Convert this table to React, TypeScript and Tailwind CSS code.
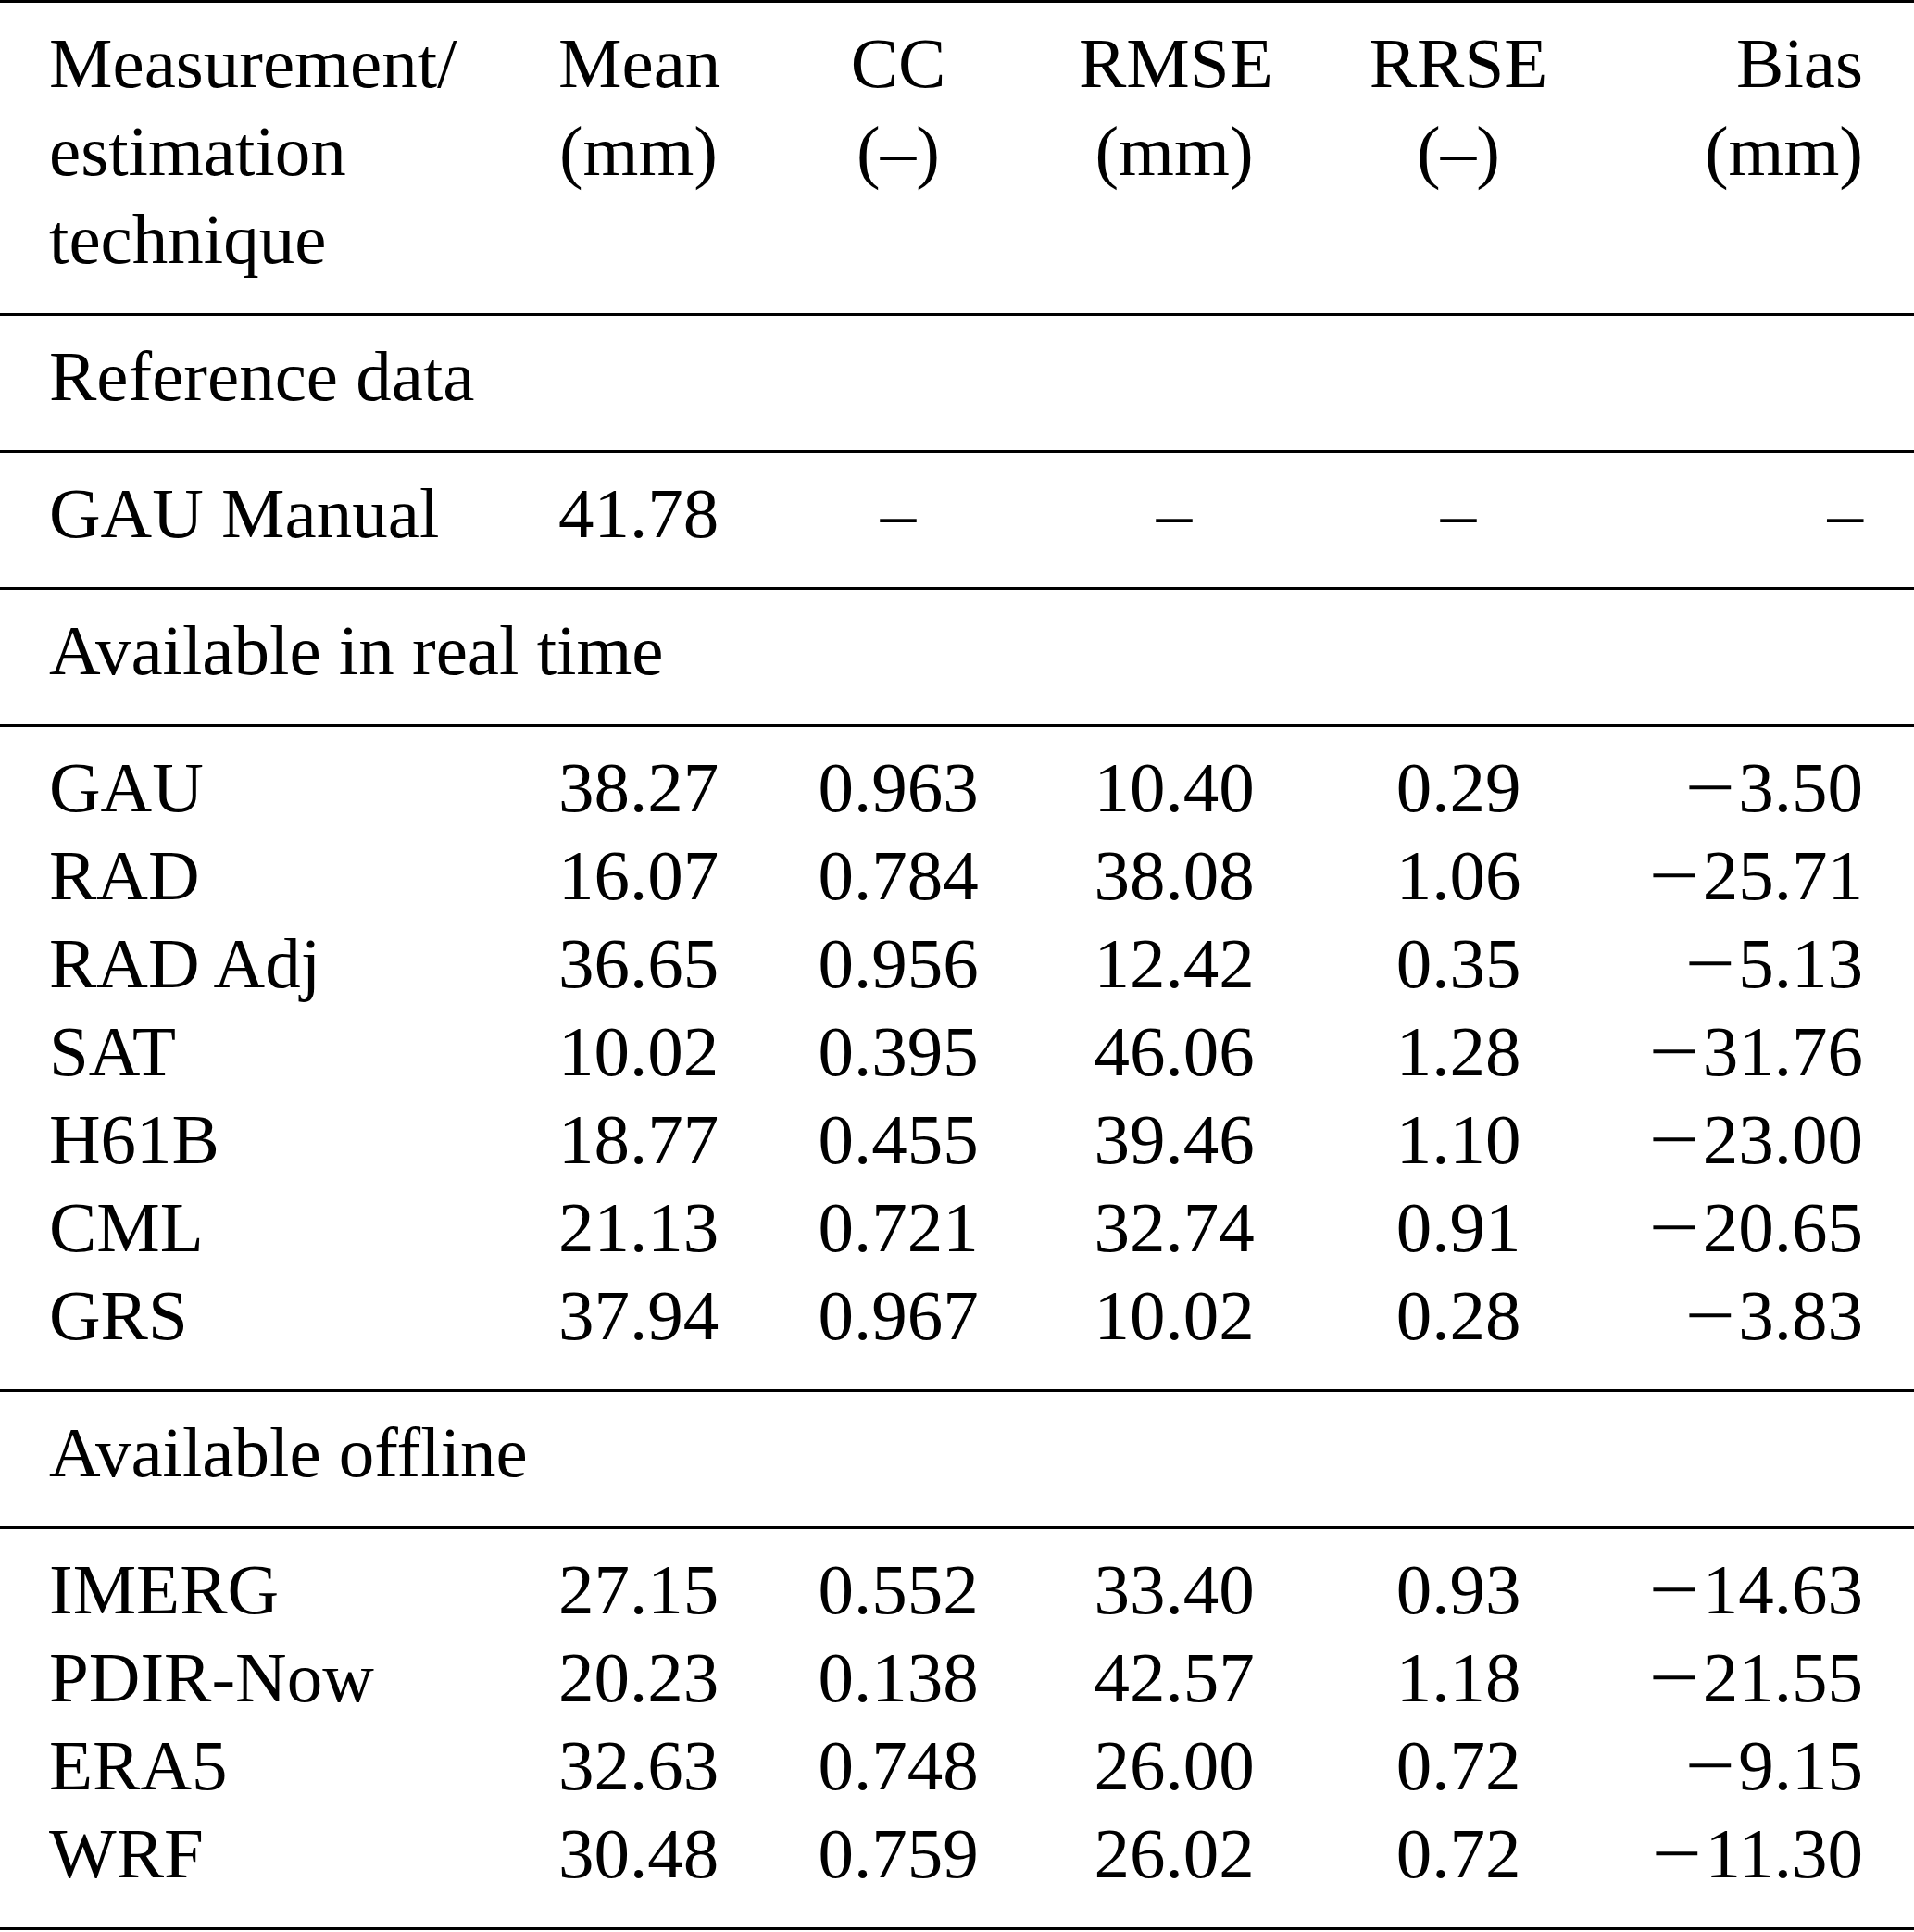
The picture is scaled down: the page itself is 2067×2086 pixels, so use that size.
type Row = {
  name: string;
  mean: string;
  cc: string;
  rmse: string;
  rrse: string;
  bias: string;
};

const realTime: Row[] = [
  { name: "GAU", mean: "38.27", cc: "0.963", rmse: "10.40", rrse: "0.29", bias: "−3.50" },
  { name: "RAD", mean: "16.07", cc: "0.784", rmse: "38.08", rrse: "1.06", bias: "−25.71" },
  { name: "RAD Adj", mean: "36.65", cc: "0.956", rmse: "12.42", rrse: "0.35", bias: "−5.13" },
  { name: "SAT", mean: "10.02", cc: "0.395", rmse: "46.06", rrse: "1.28", bias: "−31.76" },
  { name: "H61B", mean: "18.77", cc: "0.455", rmse: "39.46", rrse: "1.10", bias: "−23.00" },
  { name: "CML", mean: "21.13", cc: "0.721", rmse: "32.74", rrse: "0.91", bias: "−20.65" },
  { name: "GRS", mean: "37.94", cc: "0.967", rmse: "10.02", rrse: "0.28", bias: "−3.83" },
];

const offline: Row[] = [
  { name: "IMERG", mean: "27.15", cc: "0.552", rmse: "33.40", rrse: "0.93", bias: "−14.63" },
  { name: "PDIR-Now", mean: "20.23", cc: "0.138", rmse: "42.57", rrse: "1.18", bias: "−21.55" },
  { name: "ERA5", mean: "32.63", cc: "0.748", rmse: "26.00", rrse: "0.72", bias: "−9.15" },
  { name: "WRF", mean: "30.48", cc: "0.759", rmse: "26.02", rrse: "0.72", bias: "−11.30" },
];

const gridCols = "grid grid-cols-[550px_172px_390px_206px_408px_233px]";

// one ruled block of the table
const Section = ({ children }: { children: React.ReactNode }) => (
  <div className="pl-[53px] pr-[53px] pt-[18px] pb-[32px] border-b-[3px] border-black">
    {children}
  </div>
);

// math minus is a bit wider than the font's own glyph
const Signed = ({ value }: { value: string }) => {
  if (!value.startsWith("−")) return <>{value}</>;
  return (
    <>
      <span className="inline-block scale-x-[1.25] mr-[9px]">−</span>
      {value.slice(1)}
    </>
  );
};

const DataRow = (props: Row) => {
  const { name, mean, cc, rmse, rrse, bias } = props;
  return (
    <div className={gridCols}>
      <div>{name}</div>
      <div className="text-right">{mean}</div>
      <div className="text-center">{cc}</div>
      <div className="text-center">{rmse}</div>
      <div className="text-center">{rrse}</div>
      <div className="text-right">
        <Signed value={bias} />
      </div>
    </div>
  );
};

const App = () => {
  return (
    <div className="w-[2067px] min-h-[2086px] bg-white text-black font-['Liberation_Serif',serif] text-[77px] leading-[95px]">
      <div className="border-t-[3px] border-black">
        <Section>
          <div className={gridCols}>
            <div>
              Measurement/
              <br />
              estimation
              <br />
              technique
            </div>
            <div className="text-right">
              Mean
              <br />
              (mm)
            </div>
            <div className="text-center">
              CC
              <br />
              (–)
            </div>
            <div className="text-center">
              RMSE
              <br />
              (mm)
            </div>
            <div className="text-center">
              RRSE
              <br />
              (–)
            </div>
            <div className="text-right">
              Bias
              <br />
              (mm)
            </div>
          </div>
        </Section>
        <Section>
          <div>Reference data</div>
        </Section>
        <Section>
          <DataRow name="GAU Manual" mean="41.78" cc="–" rmse="–" rrse="–" bias="–" />
        </Section>
        <Section>
          <div>Available in real time</div>
        </Section>
        <Section>
          {realTime.map((row) => (
            <DataRow key={row.name} {...row} />
          ))}
        </Section>
        <Section>
          <div>Available offline</div>
        </Section>
        <Section>
          {offline.map((row) => (
            <DataRow key={row.name} {...row} />
          ))}
        </Section>
      </div>
    </div>
  );
};

export default App;
